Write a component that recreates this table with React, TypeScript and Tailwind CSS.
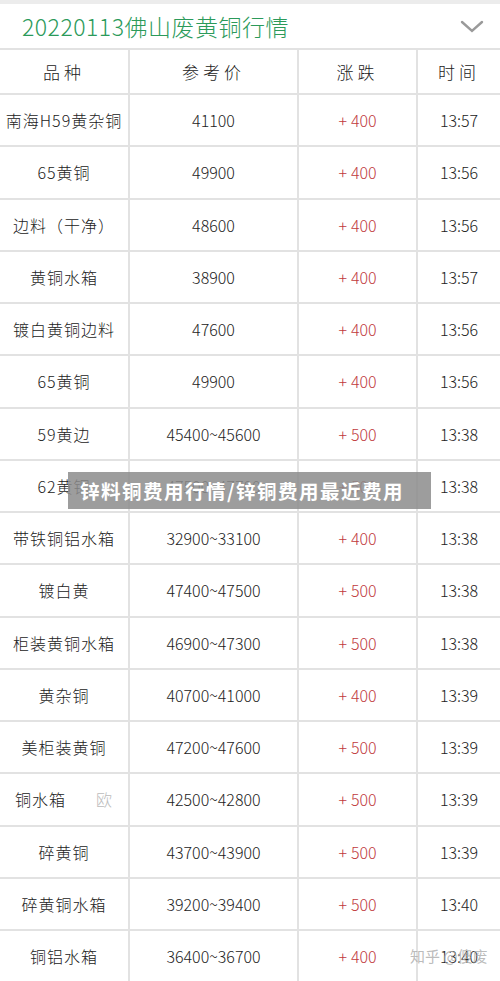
import React from "react";

const rows: [string, string, string, string][] = [
  ["南海H59黄杂铜", "41100", "+400", "13:57"],
  ["65黄铜", "49900", "+400", "13:56"],
  ["边料（干净）", "48600", "+400", "13:56"],
  ["黄铜水箱", "38900", "+400", "13:57"],
  ["镀白黄铜边料", "47600", "+400", "13:56"],
  ["65黄铜", "49900", "+400", "13:56"],
  ["59黄边", "45400~45600", "+500", "13:38"],
  ["62黄铜", "47500~47700", "+500", "13:38"],
  ["带铁铜铝水箱", "32900~33100", "+400", "13:38"],
  ["镀白黄", "47400~47500", "+500", "13:38"],
  ["柜装黄铜水箱", "46900~47300", "+500", "13:38"],
  ["黄杂铜", "40700~41000", "+400", "13:39"],
  ["美柜装黄铜", "47200~47600", "+500", "13:39"],
  ["铜水箱", "42500~42800", "+500", "13:39"],
  ["碎黄铜", "43700~43900", "+500", "13:39"],
  ["碎黄铜水箱", "39200~39400", "+500", "13:40"],
  ["铜铝水箱", "36400~36700", "+400", "13:40"],
];

const font = "font-['Noto_Sans_CJK_SC','Noto_Sans',sans-serif]";

export default function App() {
  return (
    <div className={`relative w-[500px] h-[981px] overflow-hidden bg-white ${font}`}>
      <div className="h-[4px] bg-[#ececec]" />
      <div className="h-[44px] flex items-center justify-between pl-[22px] pr-[16px]">
        <span className="text-[23px] leading-none text-[#2b9a5a] font-light tracking-[0.5px]">
          20220113佛山废黄铜行情
        </span>
        <svg width="24" height="14" viewBox="0 0 24 14" className="mt-[2px]">
          <path d="M2 2 L12 11 L22 2" fill="none" stroke="#9a9a9a" strokeWidth="2.4" strokeLinecap="round" />
        </svg>
      </div>
      <div className="grid grid-cols-[130px_169px_119px_82px] border-t-2 border-[#e2e2e2] text-[#222]">
        {["品种", "参考价", "涨跌", "时间"].map((h, i) => (
          <div
            key={h}
            className={`h-[45px] flex items-center justify-center text-[17px] font-light tracking-[4px] border-b-2 border-[#e2e2e2] ${i < 3 ? "border-r-2" : ""}`}
          >
            {h}
          </div>
        ))}
        {rows.map((r, ri) => (
          <React.Fragment key={ri}>
            <div className="h-[52.25px] flex items-center justify-center text-[16px] font-light tracking-[1px] border-b-2 border-r-2 border-[#e2e2e2]">
              {r[0] === "铜水箱" ? (
                <span className="flex w-full px-[15px] justify-between">
                  <span>铜水箱</span>
                  <span className="text-[#bbb]">欧</span>
                </span>
              ) : (
                r[0]
              )}
            </div>
            <div className="h-[52.25px] flex items-center justify-center text-[16px] font-light border-b-2 border-r-2 border-[#e2e2e2]">
              {r[1]}
            </div>
            <div className="h-[52.25px] flex items-center justify-center text-[16px] font-light text-[#c0393d] border-b-2 border-r-2 border-[#e2e2e2]">
              <span className="mr-[4px]">+</span>
              {r[2].slice(1)}
            </div>
            <div className="h-[52.25px] flex items-center justify-center text-[16px] font-light border-b-2 border-[#e2e2e2]">
              {r[3]}
            </div>
          </React.Fragment>
        ))}
      </div>
      <div className="absolute left-[68px] top-[472px] w-[363px] h-[37px] bg-[rgba(140,140,140,0.85)] flex items-center pl-[12px]">
        <span className="text-white font-bold text-[19.5px] tracking-[1.5px] leading-none whitespace-nowrap">
          锌料铜费用行情/锌铜费用最近费用
        </span>
      </div>
      <div className="absolute left-[410px] top-[948px] text-[15px] text-[rgba(170,170,170,0.8)] leading-none whitespace-nowrap">
        知乎 @傻废
      </div>
    </div>
  );
}
